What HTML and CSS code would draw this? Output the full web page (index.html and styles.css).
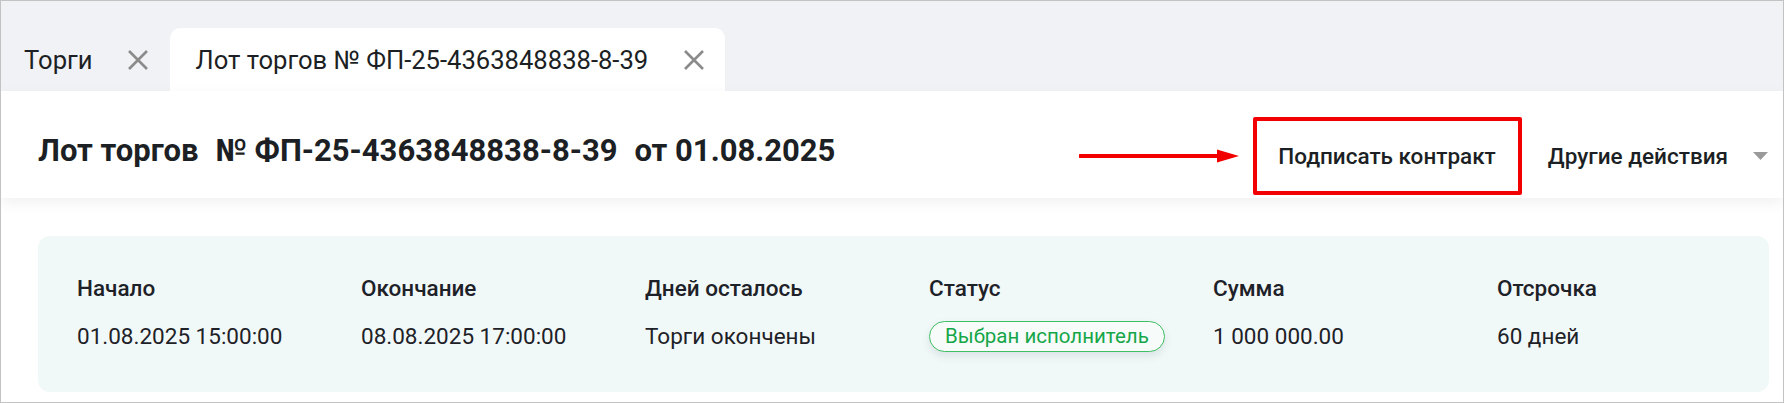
FILE: index.html
```html
<!DOCTYPE html>
<html lang="ru">
<head>
<meta charset="utf-8">
<title>Лот торгов</title>
<link rel="stylesheet" href="styles.css">
</head>
<body>
<div class="frame">
  <nav class="tabs">
    <div class="tab">
      <span class="tab-label">Торги</span>
      <svg class="tab-close" viewBox="0 0 22 22" width="22" height="22"><path d="M2 2 L20 20 M20 2 L2 20" stroke="#8b8b8b" stroke-width="2.6" fill="none"/></svg>
    </div>
    <div class="tab tab-active">
      <span class="tab-label">Лот торгов № ФП-25-4363848838-8-39</span>
      <svg class="tab-close" viewBox="0 0 22 22" width="22" height="22"><path d="M2 2 L20 20 M20 2 L2 20" stroke="#8b8b8b" stroke-width="2.6" fill="none"/></svg>
    </div>
  </nav>
  <header class="head">
    <h1 class="title"><span>Лот торгов</span><span>№ ФП-25-4363848838-8-39</span><span>от 01.08.2025</span></h1>
    <div class="actions">
      <svg class="arrow" viewBox="0 0 160 16" width="160" height="16"><path d="M1 8 L142 8" stroke="#f20000" stroke-width="4" stroke-linecap="round"/><path d="M138 1.5 L160 8 L138 14.5 Z" fill="#f20000"/></svg>
      <button class="btn-sign">Подписать контракт</button>
      <button class="btn-more">Другие действия<svg class="caret" viewBox="0 0 15 8" width="15" height="8"><path d="M0 0 L15 0 L7.5 8 Z" fill="#9a9a9a"/></svg></button>
    </div>
  </header>
  <main class="content">
    <section class="card">
      <div class="field"><div class="label">Начало</div><div class="value">01.08.2025 15:00:00</div></div>
      <div class="field"><div class="label">Окончание</div><div class="value">08.08.2025 17:00:00</div></div>
      <div class="field"><div class="label">Дней осталось</div><div class="value">Торги окончены</div></div>
      <div class="field"><div class="label">Статус</div><div class="value"><span class="badge">Выбран исполнитель</span></div></div>
      <div class="field"><div class="label">Сумма</div><div class="value">1 000 000.00</div></div>
      <div class="field"><div class="label">Отсрочка</div><div class="value">60 дней</div></div>
    </section>
  </main>
</div>
</body>
</html>
```
FILE: styles.css
```css
* { box-sizing: border-box; }
html, body { margin: 0; padding: 0; background: #fff; }
body { font-family: Roboto, "Noto Sans", sans-serif; color: #1e2228; }

.frame {
  width: 1784px;
  height: 403px;
  border: 1px solid #c3c3c3;
  overflow: hidden;
  background: #fff;
  display: flex;
  flex-direction: column;
}

.tabs {
  height: 90px;
  flex: none;
  background: #f1f2f6;
  display: flex;
  align-items: flex-end;
  padding-top: 27px;
}
.tab {
  height: 63px;
  display: flex;
  align-items: center;
  padding: 0 21px 0 23px;
  gap: 34px;
  font-size: 25.6px;
  line-height: 30px;
  color: #1c1f24;
}
.tab-active {
  background: #fff;
  border-radius: 10px 10px 0 0;
  padding: 0 20px 0 26px;
  gap: 35px;
}
.tab-close { display: block; flex: none; }

.head {
  height: 107px;
  flex: none;
  display: flex;
  align-items: center;
  justify-content: space-between;
  padding: 22px 15px 0 37px;
  position: relative;
  z-index: 1;
  background: #fff;
  box-shadow: 0 5px 14px rgba(0, 0, 0, 0.06);
}
.title {
  margin: 0 0 9px 0;
  font-size: 31px;
  line-height: 36px;
  font-weight: 700;
  display: flex;
  gap: 17px;
  color: #1c1f24;
}
.actions {
  display: flex;
  align-items: center;
}
.arrow { display: block; margin-right: 14px; }
.btn-sign, .btn-more {
  font-family: inherit;
  font-size: 22.5px;
  font-weight: 500;
  color: #1c1f24;
  background: transparent;
  cursor: pointer;
}
.btn-sign {
  height: 78px;
  border: 4px solid #f20000;
  border-radius: 2px;
  padding: 0 22px 0 21px;
}
.btn-more {
  border: 0;
  padding: 0;
  margin-left: 26px;
  display: flex;
  align-items: center;
  gap: 25px;
}
.caret { display: block; }

.content {
  flex: 1;
  padding: 38px 14px 0 37px;
}
.card {
  height: 156px;
  background: #f1f9f8;
  border-radius: 12px;
  padding: 39px 0 0 39px;
  display: grid;
  grid-template-columns: repeat(6, 284px);
}
.field {
  display: grid;
  grid-template-rows: 27px 31px;
  row-gap: 19px;
}
.label {
  font-size: 22.5px;
  line-height: 27px;
  font-weight: 500;
}
.value {
  font-size: 22.5px;
  line-height: 31px;
  display: flex;
  align-items: center;
}
.badge {
  display: inline-flex;
  align-items: center;
  height: 31px;
  padding: 0 15px;
  border: 1.5px solid #3fbf63;
  border-radius: 16px;
  color: #15a648;
  font-size: 20.5px;
  background: #f7fcfb;
  box-shadow: 0 4px 8px rgba(20, 40, 60, 0.1);
}
```
